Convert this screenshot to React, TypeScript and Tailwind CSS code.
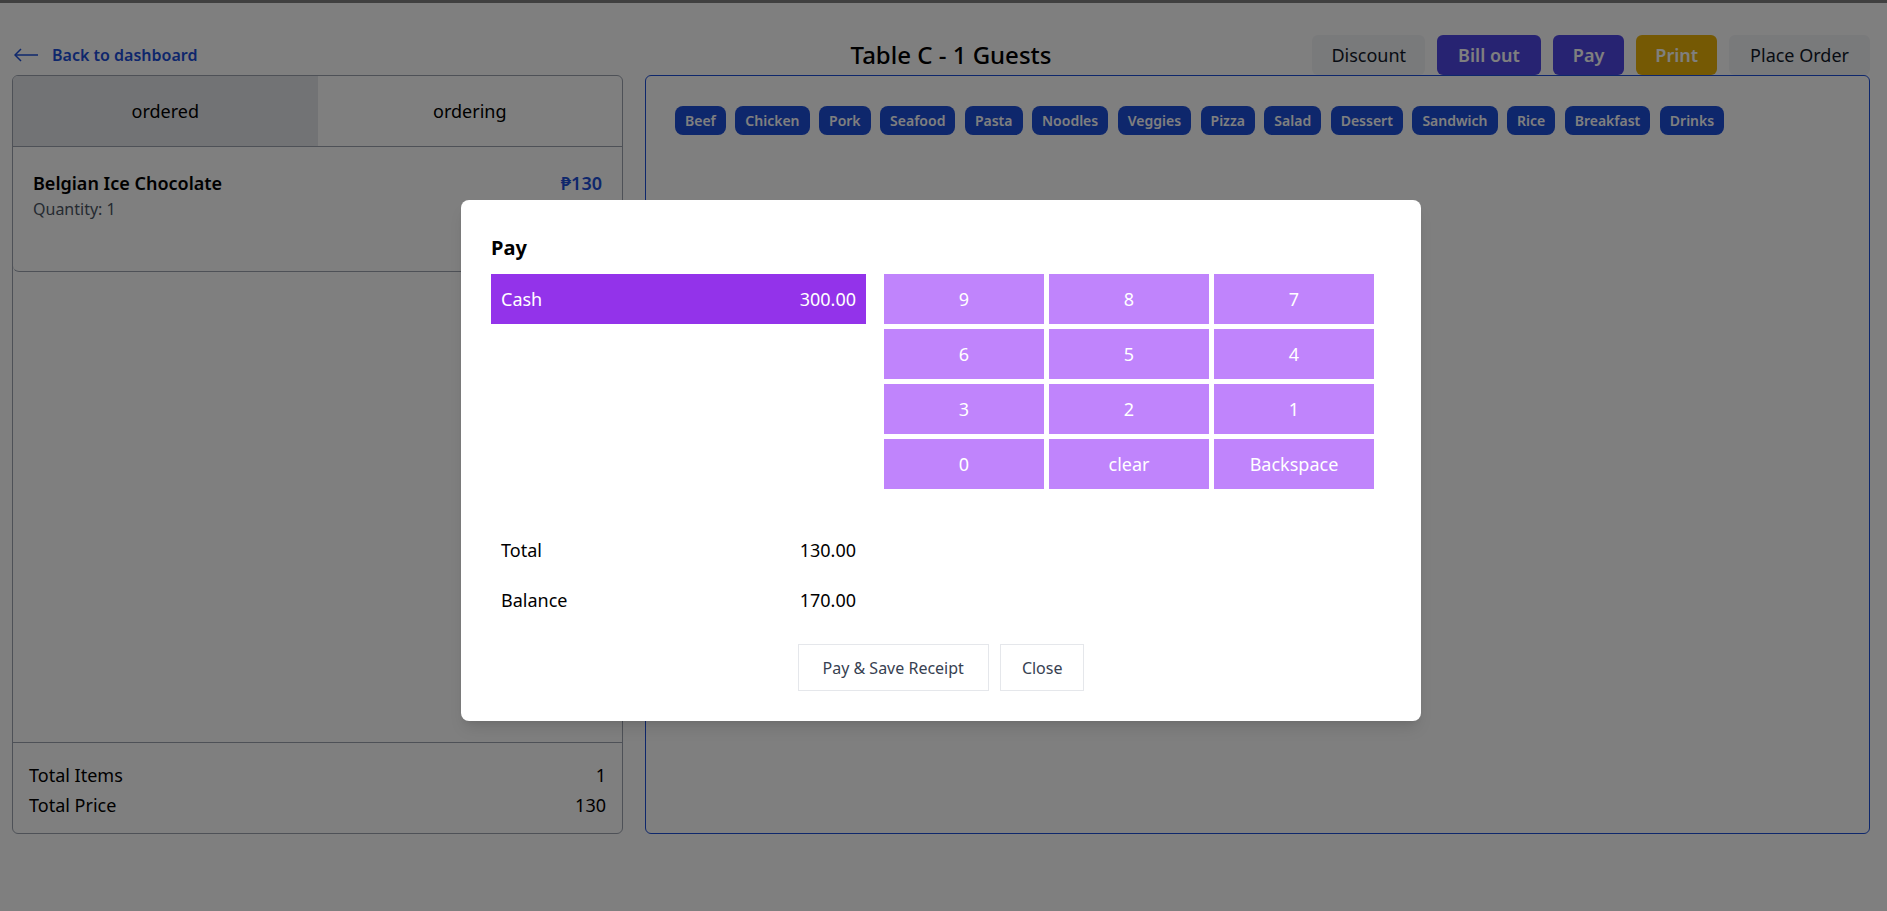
import React from "react";

const categories = [
  "Beef",
  "Chicken",
  "Pork",
  "Seafood",
  "Pasta",
  "Noodles",
  "Veggies",
  "Pizza",
  "Salad",
  "Dessert",
  "Sandwich",
  "Rice",
  "Breakfast",
  "Drinks",
];

const keys = ["9", "8", "7", "6", "5", "4", "3", "2", "1", "0", "clear", "Backspace"];

export default function App() {
  return (
    <div className="relative min-h-[911px] bg-white font-['Noto_Sans',sans-serif] text-black">
      <div className="h-[3px] bg-[#808080]" />
      <Page />
      <PayModal />
    </div>
  );
}

function Page() {
  return (
    <div className="pl-3 pr-[17px] pt-[32px]">
      {/* header */}
      <div className="grid grid-cols-[1fr_auto_1fr] items-center h-[40px]">
        <a className="flex items-center gap-[14px] pl-[2px] text-[#1d4ed8] font-semibold text-base">
          <svg width="24" height="14" viewBox="0 0 24 14" fill="none" stroke="currentColor" strokeWidth="1.5">
            <path d="M1 7h23" />
            <path d="M7 1L1 7l6 6" />
          </svg>
          Back to dashboard
        </a>
        <h1 className="pl-5 text-2xl font-medium">Table C - 1 Guests</h1>
        <div className="flex justify-end gap-[12px] text-lg">
          <button className="h-[40px] px-[19px] rounded-md bg-[#f3f4f6] text-gray-900">Discount</button>
          <button className="h-[40px] px-[21px] rounded-md bg-[#4f46e5] text-white font-semibold">Bill out</button>
          <button className="h-[40px] px-5 rounded-md bg-[#4f46e5] text-white font-semibold">Pay</button>
          <button className="h-[40px] px-[19px] rounded-md bg-[#eab308] text-white font-semibold">Print</button>
          <button className="h-[40px] px-[21px] rounded-md bg-[#f3f4f6] text-gray-900">Place Order</button>
        </div>
      </div>

      {/* panels */}
      <div className="flex gap-[22px]">
        <div className="w-[611px] h-[759px] border border-[#9ca3af] rounded-md flex flex-col overflow-hidden">
          <div className="grid grid-cols-2 h-[71px] border-b border-[#9ca3af] text-lg">
            <div className="flex items-center justify-center bg-[#e5e7eb]">ordered</div>
            <div className="flex items-center justify-center">ordering</div>
          </div>
          <div className="flex-1">
            <div className="h-[125px] border-b border-[#9ca3af] rounded-b-md px-5 pt-[22px] flex justify-between">
              <div>
                <div className="text-lg font-semibold leading-7">Belgian Ice Chocolate</div>
                <div className="text-base text-[#4b5563] leading-6">Quantity: 1</div>
              </div>
              <div className="text-lg font-semibold leading-7 text-[#1d4ed8]">₱130</div>
            </div>
          </div>
          <div className="border-t border-[#9ca3af] px-4 pt-[17px] pb-[13px] text-lg leading-[30px]">
            <div className="flex justify-between">
              <span>Total Items</span>
              <span>1</span>
            </div>
            <div className="flex justify-between">
              <span>Total Price</span>
              <span>130</span>
            </div>
          </div>
        </div>

        <div className="flex-1 h-[759px] border border-[#1d4ed8] rounded-md px-[29px] pt-[30px]">
          <div className="flex flex-wrap gap-[9.5px]">
            {categories.map((c) => (
              <span
                key={c}
                className="h-[29px] px-[10px] flex items-center rounded-lg bg-[#1d4ed8] text-white text-sm font-semibold"
              >
                {c}
              </span>
            ))}
          </div>
        </div>
      </div>
    </div>
  );
}

function PayModal() {
  return (
    <div className="absolute inset-0 bg-black/50 flex justify-center items-start pt-[200px] pr-[5px]">
      <div className="w-[960px] bg-white rounded-lg shadow-lg pl-[30px] pr-[47px] pt-[34px] pb-[30px]">
        <h2 className="text-xl font-bold leading-7 mb-[12px]">Pay</h2>
        <div className="flex gap-[18px]">
          <div className="w-[375px]">
            <div className="h-[50px] px-[10px] flex items-center justify-between bg-[#9333ea] text-white text-lg">
              <span>Cash</span>
              <span>300.00</span>
            </div>
          </div>
          <div className="grid grid-cols-[repeat(3,160px)] gap-[5px]">
            {keys.map((k) => (
              <button key={k} className="h-[50px] bg-[#c084fc] text-white text-lg">
                {k}
              </button>
            ))}
          </div>
        </div>

        <div className="w-[375px] mt-[36px] text-lg">
          <div className="h-[50px] px-[10px] flex items-center justify-between">
            <span>Total</span>
            <span>130.00</span>
          </div>
          <div className="h-[50px] px-[10px] flex items-center justify-between">
            <span>Balance</span>
            <span>170.00</span>
          </div>
        </div>

        <div className="flex justify-center gap-[11px] mt-[19px] pl-[17px]">
          <button className="h-[47px] px-[24px] border border-[#e5e7eb] text-[#374151] text-base">
            Pay &amp; Save Receipt
          </button>
          <button className="h-[47px] px-[21px] border border-[#e5e7eb] text-[#374151] text-base">Close</button>
        </div>
      </div>
    </div>
  );
}
